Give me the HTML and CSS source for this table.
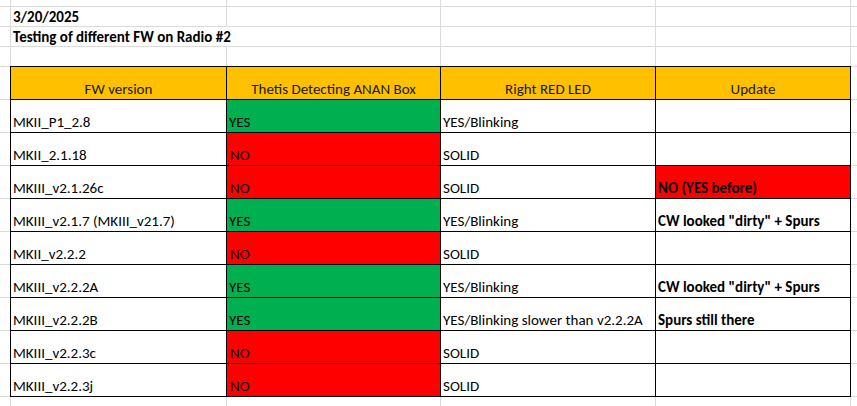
FILE: index.html
```html
<!DOCTYPE html>
<html>
<head>
<meta charset="utf-8">
<link rel="stylesheet" href="styles.css">
</head>
<body>
<div class="sheet">
  <div class="c"></div><div class="c"></div><div class="c"></div><div class="c"></div><div class="c"></div><div class="c"></div>
  <div class="c"></div><div class="c title">3/20/2025</div><div class="c"></div><div class="c"></div><div class="c"></div><div class="c"></div>
  <div class="c"></div><div class="c title span2">Testing of different FW on Radio #2</div><div class="c"></div><div class="c"></div><div class="c"></div>
  <div class="c"></div><div class="c"></div><div class="c"></div><div class="c"></div><div class="c"></div><div class="c"></div>

  <div class="table">
    <div class="t head">FW version</div>
    <div class="t head">Thetis Detecting ANAN Box</div>
    <div class="t head">Right RED LED</div>
    <div class="t head">Update</div>

    <div class="t">MKII_P1_2.8</div>
    <div class="t green">YES</div>
    <div class="t">YES/Blinking</div>
    <div class="t"></div>

    <div class="t">MKII_2.1.18</div>
    <div class="t red no">NO</div>
    <div class="t">SOLID</div>
    <div class="t"></div>

    <div class="t">MKIII_v2.1.26c</div>
    <div class="t red no">NO</div>
    <div class="t">SOLID</div>
    <div class="t red bold">NO (YES before)</div>

    <div class="t">MKIII_v2.1.7 (MKIII_v21.7)</div>
    <div class="t green">YES</div>
    <div class="t">YES/Blinking</div>
    <div class="t bold">CW looked "dirty" + Spurs</div>

    <div class="t">MKII_v2.2.2</div>
    <div class="t red no">NO</div>
    <div class="t">SOLID</div>
    <div class="t"></div>

    <div class="t">MKIII_v2.2.2A</div>
    <div class="t green">YES</div>
    <div class="t">YES/Blinking</div>
    <div class="t bold">CW looked "dirty" + Spurs</div>

    <div class="t">MKIII_v2.2.2B</div>
    <div class="t green">YES</div>
    <div class="t">YES/Blinking slower than v2.2.2A</div>
    <div class="t bold">Spurs still there</div>

    <div class="t">MKIII_v2.2.3c</div>
    <div class="t red no">NO</div>
    <div class="t">SOLID</div>
    <div class="t"></div>

    <div class="t">MKIII_v2.2.3j</div>
    <div class="t red no">NO</div>
    <div class="t">SOLID</div>
    <div class="t"></div>
  </div>

  <div class="c"></div><div class="c"></div>
  <div class="c"></div><div class="c"></div>
  <div class="c"></div><div class="c"></div>
  <div class="c"></div><div class="c"></div>
  <div class="c"></div><div class="c"></div>
  <div class="c"></div><div class="c"></div>
  <div class="c"></div><div class="c"></div>
  <div class="c"></div><div class="c"></div>
  <div class="c"></div><div class="c"></div>
  <div class="c"></div><div class="c"></div>

  <div class="c"></div><div class="c"></div><div class="c"></div><div class="c"></div><div class="c"></div><div class="c"></div>
</div>
</body>
</html>
```

FILE: styles.css
```css
html, body {
  margin: 0;
  padding: 0;
  background: #fff;
}

body {
  font-family: Carlito, Calibri, Lato, "Liberation Sans", sans-serif;
  font-size: 15px;
  color: #000;
}

.sheet {
  display: grid;
  grid-template-columns: 10px 215px 213px 214px 194px 1fr;
  grid-template-rows: 6px 19px 19px 19px repeat(10, 32px) 1fr;
  gap: 1px;
  background: #dadada;
  height: 406px;
  overflow: hidden;
}

.c {
  background: #fff;
  min-width: 0;
}

.title {
  font-weight: bold;
  display: flex;
  align-items: flex-end;
  padding: 0 0 0 2px;
  line-height: 18px;
  white-space: nowrap;
}

.span2 {
  grid-column: span 2;
}

.table {
  grid-column: 2 / 6;
  grid-row: 5 / 15;
  margin: -1px;
  display: grid;
  grid-template-columns: 215px 213px 214px 194px;
  grid-template-rows: repeat(10, 32px);
  gap: 1px;
  padding: 1px;
  background: #000;
}

.t {
  background: #fff;
  display: flex;
  align-items: flex-end;
  padding: 0 2px 1px;
  line-height: 18px;
  white-space: nowrap;
  overflow: hidden;
}

.head {
  background: #ffc000;
  justify-content: center;
  color: #1a1a1a;
}

.green {
  background: #00b050;
}

.red {
  background: #ff0000;
}

.no {
  padding-left: 3px;
}

.bold {
  font-weight: bold;
}
```
